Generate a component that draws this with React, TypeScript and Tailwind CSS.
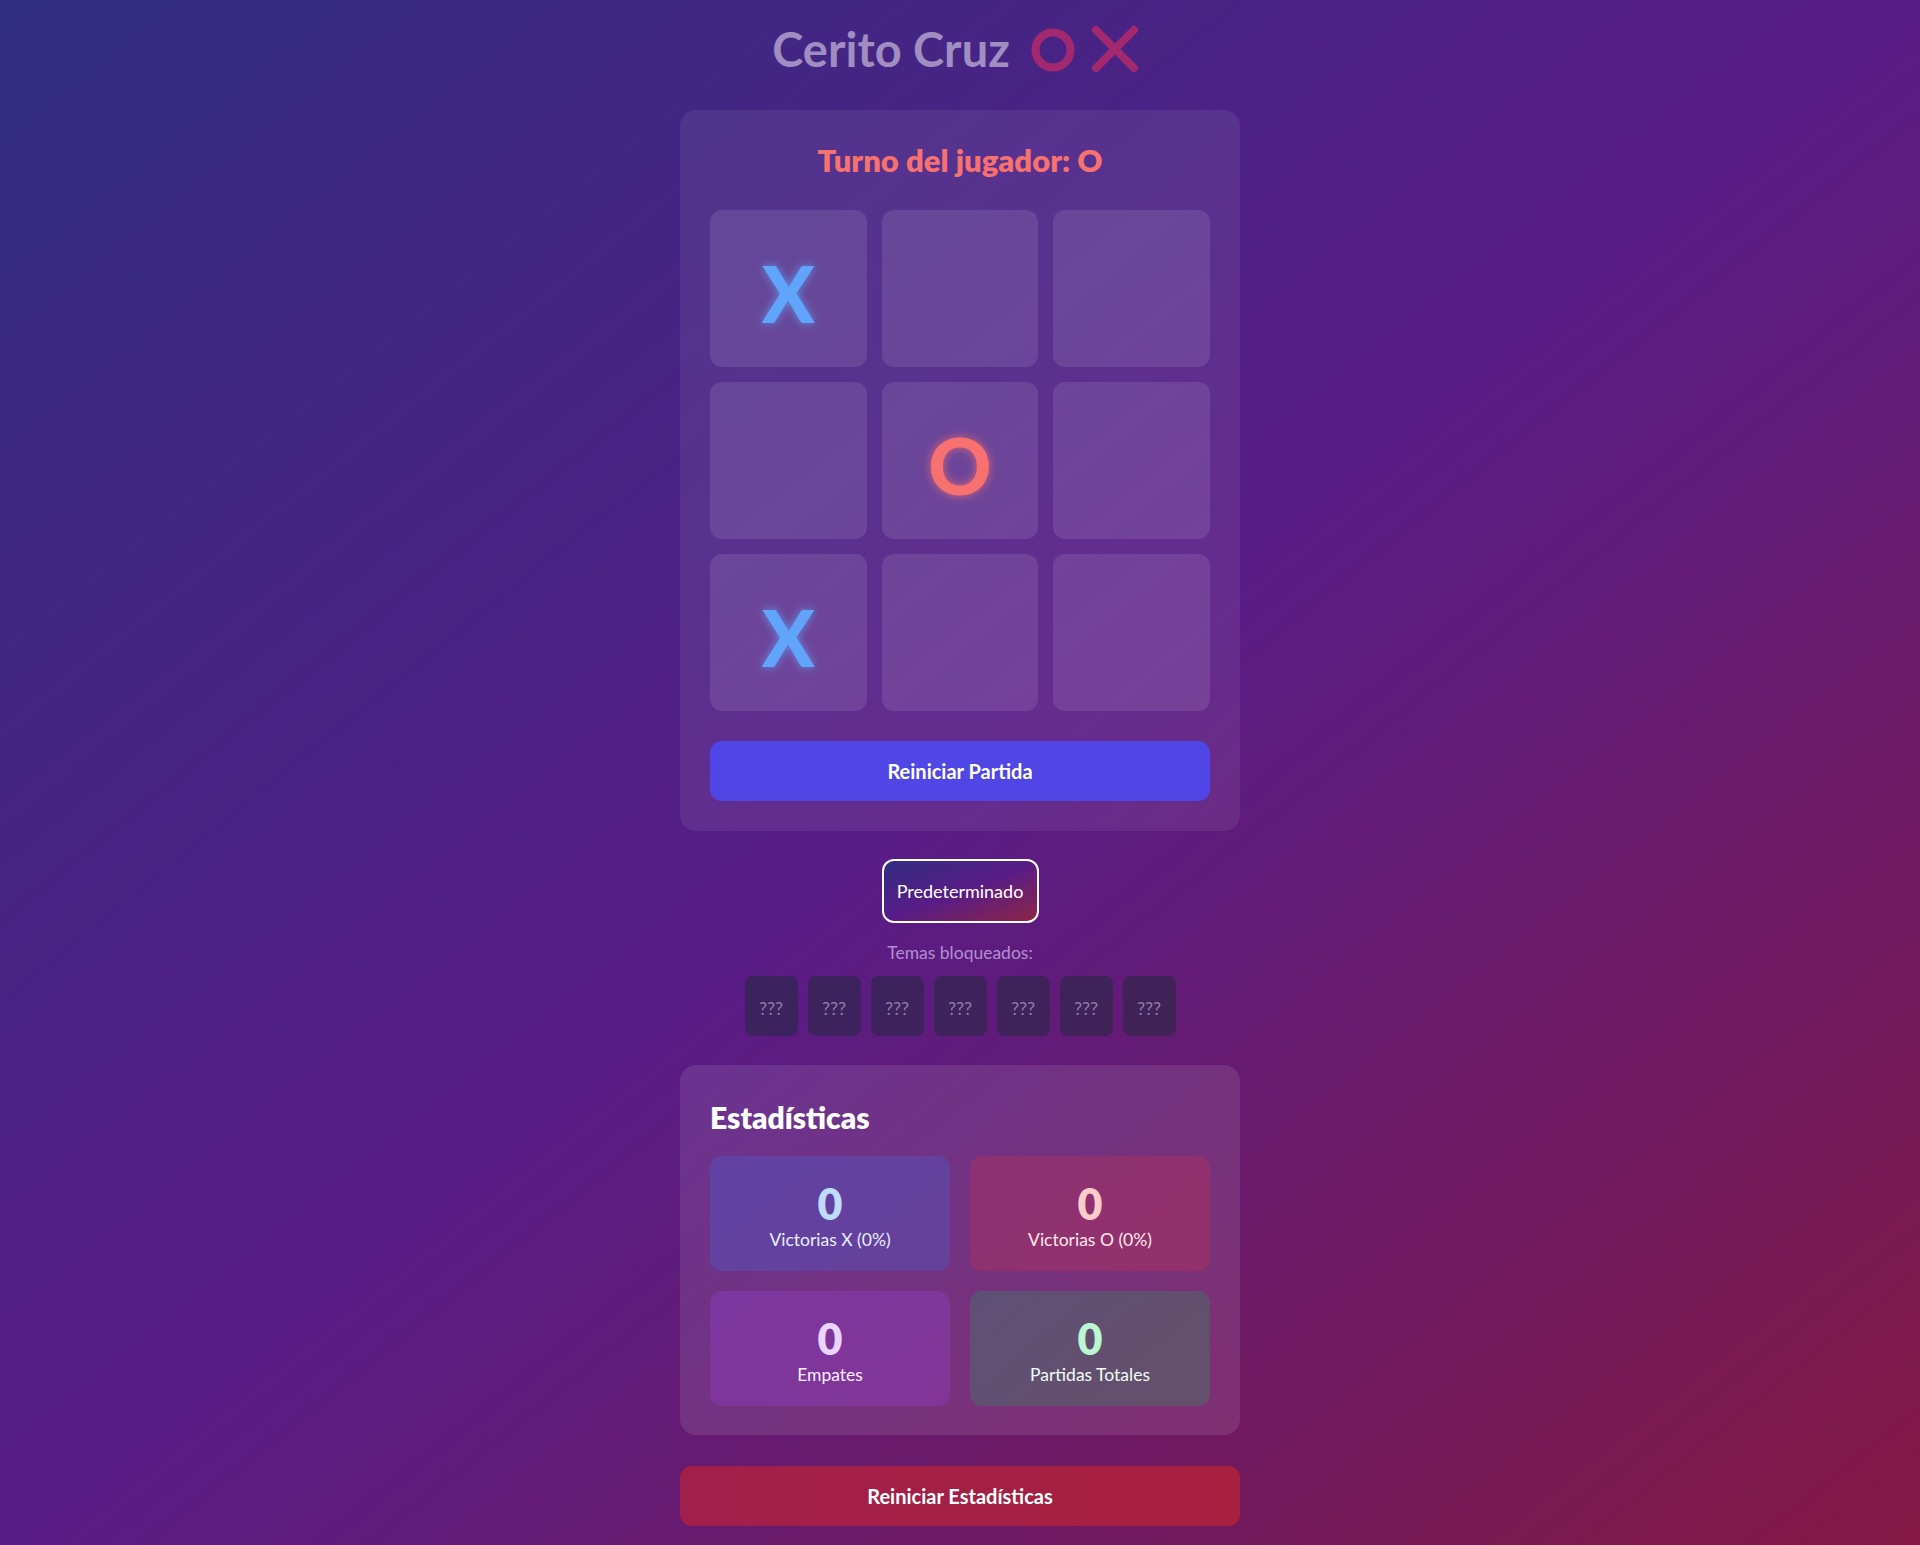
import React from 'react';

type Cell = 'X' | 'O' | null;

const board: Cell[] = ['X', null, null, null, 'O', null, 'X', null, null];

const stats = [
  { value: 0, label: 'Victorias X (0%)', box: 'bg-blue-500/20', num: 'text-[#bfdbfe]', text: 'text-[#e6efff]' },
  { value: 0, label: 'Victorias O (0%)', box: 'bg-red-500/20', num: 'text-[#fecaca]', text: 'text-[#ffe8e8]' },
  { value: 0, label: 'Empates', box: 'bg-purple-500/20', num: 'text-[#e9d5ff]', text: 'text-[#f6eeff]' },
  { value: 0, label: 'Partidas Totales', box: 'bg-green-500/20', num: 'text-[#bbf7d0]', text: 'text-[#f0fdf4]' },
];

const App: React.FC = () => {
  return (
    <div className="min-h-screen w-full bg-[linear-gradient(to_bottom_right,#312e81,#581c87,#831843)] font-['Lato','Liberation_Sans',sans-serif] flex flex-col items-center pt-[25px] pb-5">
      <h1 className="flex items-center text-[47px] leading-[48px] font-bold text-[#a08dc2] mb-[37px] pr-[9px]">
        <span>Cerito Cruz</span>
        <svg className="ml-[21px] mt-[2px]" width="44" height="44" viewBox="0 0 44 44">
          <circle cx="22" cy="22" r="17.5" fill="none" stroke="#a2296f" strokeWidth="8" />
        </svg>
        <svg className="ml-[16px] -mt-[1px]" width="48" height="48" viewBox="0 0 48 48">
          <path d="M5 5 L43 43 M43 5 L5 43" stroke="#a2296f" strokeWidth="8" strokeLinecap="round" />
        </svg>
      </h1>

      <div className="w-[560px] rounded-2xl bg-white/[0.07] px-[30px] pt-8 pb-[30px]">
        <h2 className="text-center text-[31px] leading-[36px] font-extrabold text-[#f87171] mb-8">
          Turno del jugador: O
        </h2>

        <div className="grid grid-cols-3 gap-[15px]">
          {board.map((cell, i) => (
            <div
              key={i}
              className="h-[157px] rounded-xl bg-white/10 flex items-center justify-center pt-2 text-[78px] leading-none font-black"
            >
              {cell === 'X' && (
                <span className="text-[#60a5fa] [text-shadow:0_0_10px_rgba(96,165,250,0.8)]">X</span>
              )}
              {cell === 'O' && (
                <span className="text-[#f87171] [text-shadow:0_0_10px_rgba(248,113,113,0.8)]">O</span>
              )}
            </div>
          ))}
        </div>

        <button className="mt-[30px] w-full h-[60px] rounded-xl bg-[#4f46e5] text-white text-xl font-bold">
          Reiniciar Partida
        </button>
      </div>

      <button className="mt-[28px] h-16 w-[157px] rounded-xl border-2 border-white bg-[linear-gradient(to_bottom_right,#312e81,#581c87,#8c2545)] text-white text-[18px]">
        Predeterminado
      </button>

      <p className="mt-[18px] text-[17.5px] leading-6 text-[#b48fd2]">Temas bloqueados:</p>

      <div className="mt-[11px] flex gap-[10px]">
        {Array.from({ length: 7 }).map((_, i) => (
          <div
            key={i}
            className="w-[53px] h-[60px] rounded-lg bg-gray-800/50 flex items-center justify-center pt-1 text-[18px] text-[#8e7fa6]"
          >
            ???
          </div>
        ))}
      </div>

      <div className="mt-[29px] w-[560px] rounded-2xl bg-white/10 px-[30px] pt-[31px] pb-[29px]">
        <h2 className="text-[30px] leading-[42px] font-extrabold text-white mb-[18px]">Estadísticas</h2>
        <div className="grid grid-cols-2 gap-5">
          {stats.map((s) => (
            <div key={s.label} className={`h-[115px] rounded-xl ${s.box} flex flex-col items-center justify-center pt-[6px]`}>
              <div className={`text-[43px] leading-[44px] font-extrabold ${s.num}`}>{s.value}</div>
              <div className={`mt-[2px] text-[17.5px] leading-6 ${s.text}`}>{s.label}</div>
            </div>
          ))}
        </div>
      </div>

      <button className="mt-[31px] w-[560px] h-[60px] rounded-xl bg-[linear-gradient(to_right,#a11f4b,#a82040)] text-white text-xl font-bold">
        Reiniciar Estadísticas
      </button>
    </div>
  );
};

export default App;
